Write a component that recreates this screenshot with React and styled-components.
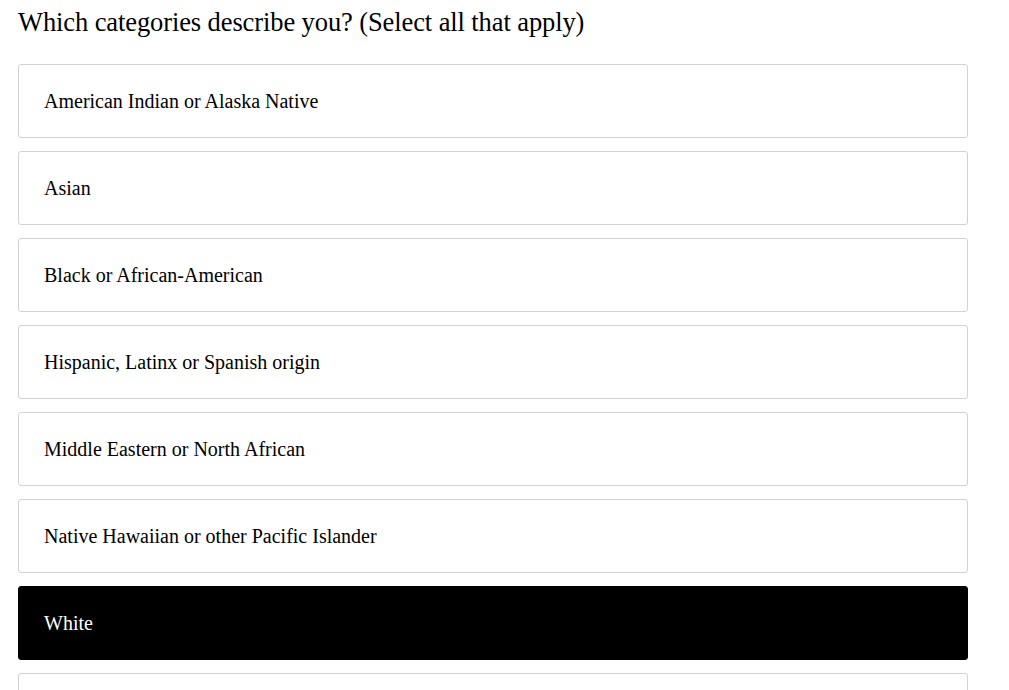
import React, { useState } from "react";
import styled, { createGlobalStyle } from "styled-components";

const GlobalStyle = createGlobalStyle`
  body {
    margin: 0;
    background: #ffffff;
    font-family: "Liberation Serif", "Times New Roman", serif;
    color: #000000;
  }
`;

const Page = styled.div`
  padding: 4px 41px 0 18px;
`;

const Question = styled.h2`
  margin: 0 0 24px 0;
  font-size: 26.5px;
  font-weight: 400;
  line-height: 36px;
  letter-spacing: -0.1px;
`;

const OptionList = styled.div`
  display: flex;
  flex-direction: column;
  gap: 13px;
`;

const Option = styled.button`
  display: flex;
  align-items: center;
  height: 74px;
  padding: 0 25px;
  border: 1px solid ${(p) => (p.$selected ? "#000000" : "#d2d2d2")};
  border-radius: 3px;
  background: ${(p) => (p.$selected ? "#000000" : "#ffffff")};
  color: ${(p) => (p.$selected ? "#ffffff" : "#000000")};
  font-family: inherit;
  font-size: 20px;
  text-align: left;
  cursor: pointer;
`;

const options = [
  "American Indian or Alaska Native",
  "Asian",
  "Black or African-American",
  "Hispanic, Latinx or Spanish origin",
  "Middle Eastern or North African",
  "Native Hawaiian or other Pacific Islander",
  "White",
  "Other",
];

function App() {
  const [selected, setSelected] = useState(["White"]);

  const toggle = (name) => {
    setSelected((cur) =>
      cur.includes(name) ? cur.filter((n) => n !== name) : [...cur, name]
    );
  };

  return (
    <Page>
      <GlobalStyle />
      <Question>Which categories describe you? (Select all that apply)</Question>
      <OptionList>
        {options.map((name) => (
          <Option
            key={name}
            $selected={selected.includes(name)}
            onClick={() => toggle(name)}
          >
            {name}
          </Option>
        ))}
      </OptionList>
    </Page>
  );
}

export default App;
